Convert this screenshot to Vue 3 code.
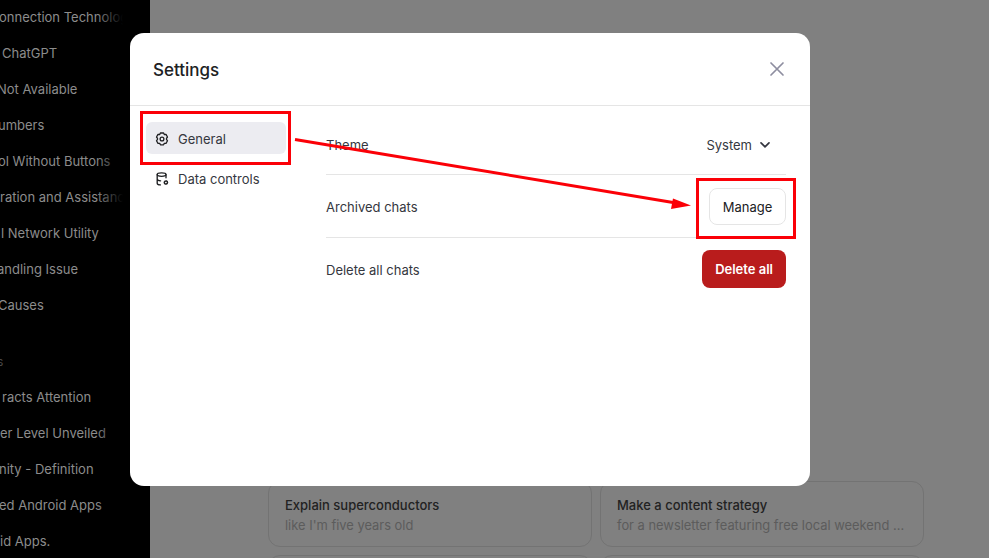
<template>
  <div class="page">
    <aside class="sidebar">
      <div
        v-for="(chat, index) in chats"
        :key="index"
        class="chat-item"
        :class="{ 'chat-heading': chat.heading }"
      >
        <span class="chat-title" :style="{ marginLeft: chat.x + 'px' }">{{ chat.title }}</span>
      </div>
      <div class="sidebar-fade"></div>
    </aside>

    <main class="main">
      <div class="examples">
        <div v-for="(card, index) in cards" :key="index" class="example-card">
          <div class="example-title">{{ card.title }}</div>
          <div class="example-sub">{{ card.sub }}</div>
        </div>
      </div>
    </main>

    <div class="overlay">
      <div class="modal">
        <header class="modal-header">
          <h2>Settings</h2>
          <button class="close-btn" aria-label="Close">
            <svg width="18" height="18" viewBox="0 0 18 18" fill="none" stroke="currentColor" stroke-width="1.7" stroke-linecap="round">
              <path d="M3 3l12 12M15 3L3 15" />
            </svg>
          </button>
        </header>

        <div class="modal-body">
          <nav class="tabs">
            <div class="tab active">
              <svg class="tab-icon" width="14" height="14" viewBox="0 0 14 14" fill="none" stroke="currentColor" stroke-width="1.3" stroke-linejoin="round">
                <path d="M5.4 1h3.2l.7 1.5 1.7-.1 1.5 2.6-1 1.4v1l1 1.4-1.5 2.6-1.7-.1-.7 1.5H5.4l-.7-1.5-1.7.1-1.5-2.6 1-1.4v-1l-1-1.4L3 2.4l1.7.1z" />
                <circle cx="7" cy="7" r="1.9" />
              </svg>
              <span>General</span>
            </div>
            <div class="tab">
              <svg class="tab-icon" width="14" height="14" viewBox="0 0 14 14" fill="none" stroke="currentColor" stroke-width="1.35" stroke-linecap="round">
                <ellipse cx="6.6" cy="2.6" rx="4.4" ry="1.7" />
                <path d="M2.2 2.6v8.6c0 1 1.4 1.6 3.2 1.7M11 2.6v3.2M2.2 7c0 1 1.5 1.7 3.4 1.8" />
                <circle cx="10.9" cy="10.5" r="1.6" stroke-width="1.5" stroke-dasharray="1.4 0.5" />
              </svg>
              <span>Data controls</span>
            </div>
          </nav>

          <section class="panel">
            <div class="row row-theme">
              <span>Theme</span>
              <div class="select">
                <span>System</span>
                <svg width="12" height="12" viewBox="0 0 12 12" fill="none" stroke="currentColor" stroke-width="1.7" stroke-linecap="round" stroke-linejoin="round">
                  <path d="M2 3.8l4 4 4-4" />
                </svg>
              </div>
            </div>
            <div class="row row-archived">
              <span>Archived chats</span>
              <button class="btn btn-outline">Manage</button>
            </div>
            <div class="row row-delete">
              <span>Delete all chats</span>
              <button class="btn btn-danger">Delete all</button>
            </div>
          </section>
        </div>
      </div>
    </div>

    <!-- red annotations drawn on top of the screenshot -->
    <svg class="annotations" width="989" height="558" viewBox="0 0 989 558" fill="none">
      <rect x="141.5" y="112.5" width="148" height="51" stroke="#fb0007" stroke-width="3" />
      <rect x="697.5" y="179.5" width="97" height="58" stroke="#fb0007" stroke-width="3" />
      <path d="M295 139.5L676 203" stroke="#fb0007" stroke-width="3" />
      <path d="M691 205.5L673 198.5L671 209z" fill="#fb0007" />
    </svg>
  </div>
</template>

<script setup>
const chats = [
  { title: 'onnection Technology', x: -1 },
  { title: 'ChatGPT', x: 2 },
  { title: 'Not Available', x: -3 },
  { title: 'umbers', x: -2 },
  { title: 'ol Without Buttons', x: -2 },
  { title: 'ration and Assistance', x: 0 },
  { title: 'l Network Utility', x: 1 },
  { title: 'andling Issue', x: -3 },
  { title: 'Causes', x: -2 },
  { title: 's', x: -3, heading: true },
  { title: 'racts Attention', x: 2 },
  { title: 'er Level Unveiled', x: 0 },
  { title: 'nity - Definition', x: -1 },
  { title: 'ed Android Apps', x: -1 },
  { title: 'id Apps.', x: 0 }
]

const cards = [
  { title: 'Explain superconductors', sub: "like I'm five years old" },
  { title: 'Make a content strategy', sub: 'for a newsletter featuring free local weekend ...' },
  { title: '', sub: '' },
  { title: '', sub: '' }
]
</script>

<style>
html,
body {
  margin: 0;
  background: #fff;
}
</style>

<style scoped>
.page {
  position: relative;
  display: flex;
  width: 989px;
  height: 558px;
  overflow: hidden;
  font-family: Inter, "Liberation Sans", sans-serif;
  color: #0d0d0d;
}

.sidebar {
  position: relative;
  flex: 0 0 150px;
  background: #000;
  overflow: hidden;
}

.chat-item {
  height: 36px;
  font-size: 13px;
  line-height: 36px;
  color: #8c8c8c;
  white-space: nowrap;
}

.chat-item:first-child {
  margin-top: -1px;
}

.chat-heading {
  height: 35px;
  margin-top: 21px;
  font-size: 12px;
  color: #4a4a4a;
}

.chat-title {
  display: inline-block;
}

/* long titles fade out before the edge of the sidebar */
.sidebar-fade {
  position: absolute;
  top: 0;
  bottom: 0;
  left: 96px;
  width: 54px;
  background: linear-gradient(to right, rgba(0, 0, 0, 0), #000 50%);
}

.main {
  flex: 1;
  min-width: 0;
  background: #808080;
}

.examples {
  display: grid;
  grid-template-columns: 324px 324px;
  gap: 8px;
  padding: 481px 0 0 118px;
}

.example-card {
  box-sizing: border-box;
  height: 66px;
  padding: 14px 16px;
  border: 1px solid #737373;
  border-radius: 12px;
}

.example-title {
  font-size: 13px;
  line-height: 18px;
  font-weight: 500;
  color: #222;
  white-space: nowrap;
}

.example-sub {
  margin-top: 3px;
  font-size: 12.9px;
  line-height: 18px;
  color: #5c5c5c;
  white-space: nowrap;
}

.overlay {
  position: absolute;
  inset: 0;
  box-sizing: border-box;
  padding: 33px 0 0 130px;
}

.modal {
  display: flex;
  flex-direction: column;
  width: 680px;
  height: 453px;
  background: #fff;
  border-radius: 14px;
  overflow: hidden;
}

.modal-header {
  display: flex;
  align-items: center;
  justify-content: space-between;
  box-sizing: border-box;
  height: 73px;
  padding: 1px 24px 0 23px;
  border-bottom: 1px solid #e5e5e5;
}

.modal-header h2 {
  margin: 0;
  font-size: 17px;
  font-weight: 500;
  color: #202123;
}

.close-btn {
  display: flex;
  margin-top: -1px;
  padding: 0;
  border: 0;
  background: none;
  color: #8e8ea0;
}

.modal-body {
  display: flex;
  flex: 1;
}

.tabs {
  flex: 0 0 140px;
  padding: 16px 40px 0 16px;
  display: flex;
  flex-direction: column;
  gap: 8px;
}

.tab {
  display: flex;
  align-items: center;
  gap: 9px;
  box-sizing: border-box;
  height: 32px;
  padding: 1px 9px 0;
  border-radius: 6px;
  font-size: 13px;
  color: #353740;
}

.tab.active {
  background: #ececf1;
}

.tab-icon {
  flex: none;
  color: #202123;
}

.panel {
  flex: 1;
  margin-right: 24px;
  padding-top: 10px;
  font-size: 13px;
  color: #353740;
}

.row {
  display: flex;
  align-items: center;
  justify-content: space-between;
  box-sizing: border-box;
  height: 63px;
  border-bottom: 1px solid #e5e5e5;
}

.row-archived {
  padding-top: 1px;
}

.row-delete {
  border-bottom: 0;
}

.row-delete .btn {
  margin-bottom: 1px;
}

.row-theme {
  height: 59px;
}

.select {
  display: flex;
  align-items: center;
  gap: 7px;
  margin-right: 15px;
}

.btn {
  box-sizing: border-box;
  height: 38px;
  padding: 0 13px;
  border-radius: 8px;
  font-family: inherit;
  font-size: 13px;
}

.btn-outline {
  width: 77px;
  height: 37px;
  padding: 0;
  border: 1px solid #e5e5e5;
  background: #fff;
  color: #202123;
}

.btn-danger {
  border: 0;
  background: #b91c1c;
  color: #fff;
  font-weight: 600;
}

.annotations {
  position: absolute;
  top: 0;
  left: 0;
  pointer-events: none;
}
</style>
